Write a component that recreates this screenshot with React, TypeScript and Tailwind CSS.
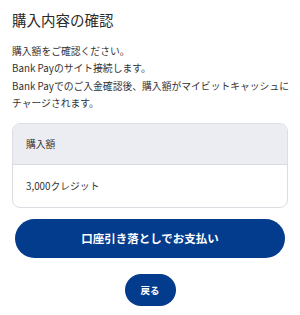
import React from 'react';

const App: React.FC = () => {
  return (
    <div className="w-[300px] h-[315px] bg-white px-3 font-['Noto_Sans_CJK_JP','Noto_Sans',sans-serif] text-[#333]">
      <h1 className="pt-[9px] text-[14.5px] leading-[22px] font-normal text-[#2b2b2b]">購入内容の確認</h1>

      <p className="mt-[12px] -mr-[4px] text-[9.8px] leading-[17.3px]">
        購入額をご確認ください。
        <br />
        Bank Payのサイト接続します。
        <br />
        Bank Payでのご入金確認後、購入額がマイビットキャッシュにチャージされます。
      </p>

      <div className="mt-[11px] rounded-[8px] border border-[#dcdde2] overflow-hidden">
        <div className="h-[41px] flex items-center px-[13px] bg-[#ecedf2] border-b border-[#d9dae0] text-[9.8px]">
          購入額
        </div>
        <div className="h-[42px] flex items-center px-[13px] text-[9.8px]">3,000クレジット</div>
      </div>

      <button className="mt-[11px] mx-[3px] w-[270px] h-[39px] rounded-full bg-[#033c8d] text-white text-[11.5px] font-bold flex items-center justify-center">
        口座引き落としでお支払い
      </button>

      <div className="mt-[16px] flex justify-center">
        <button className="w-[51px] h-[32px] rounded-full bg-[#033c8d] text-white text-[9.5px] font-bold flex items-center justify-center">
          戻る
        </button>
      </div>
    </div>
  );
};

export default App;
